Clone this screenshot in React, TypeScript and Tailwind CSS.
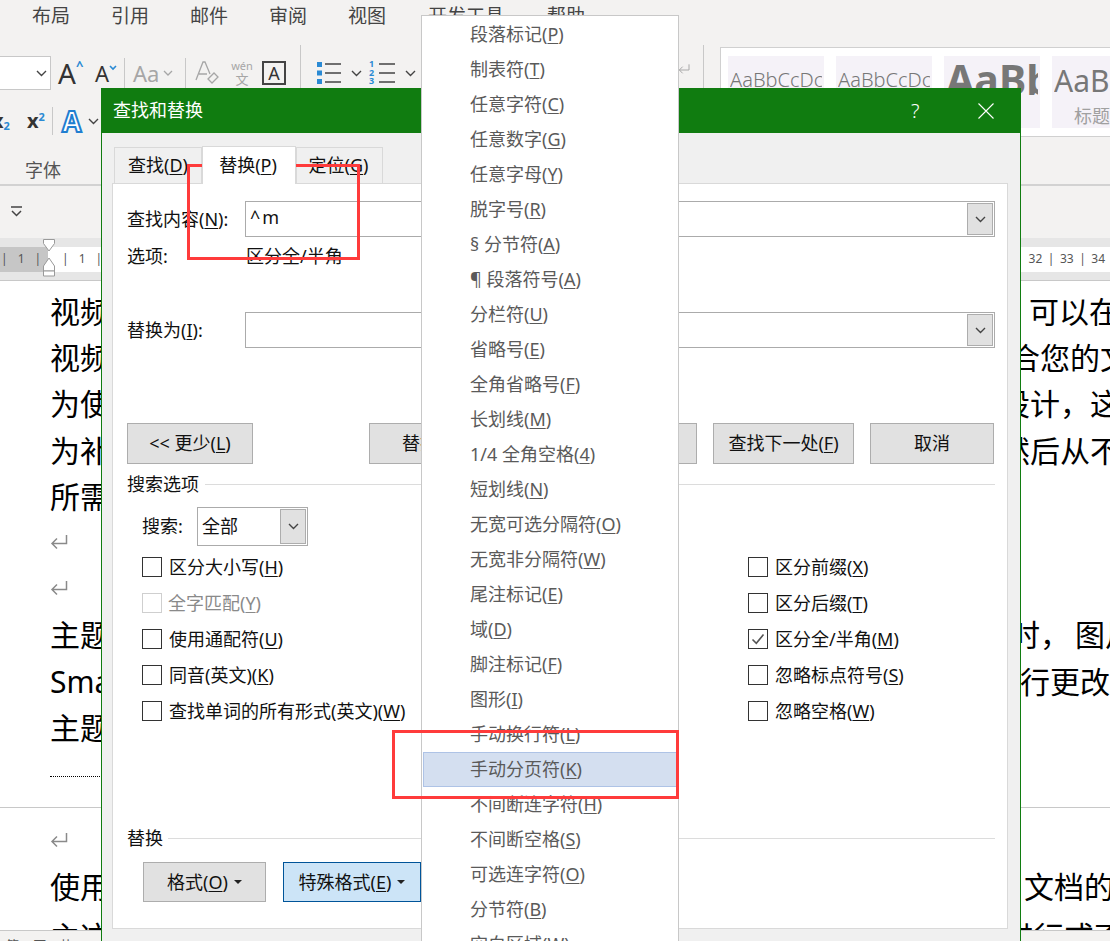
import React from "react";

const Chev = ({ className = "" }: { className?: string }) => (
  <svg width="11" height="7" viewBox="0 0 11 7" className={className} fill="none" stroke="#444" strokeWidth="1.4">
    <path d="M1 1l4.5 4.5L10 1" />
  </svg>
);

const Ret = ({ color = "#8a8a8a", w = 18 }: { color?: string; w?: number }) => (
  <svg width={w} height="16" viewBox="0 0 18 16" fill="none" stroke={color} strokeWidth="1.5">
    <path d="M16.5 1v8.5H2M7 4.5L2 9.5l5 5" />
  </svg>
);

const Acc = ({ t, k, after = ")" }: { t: string; k: string; after?: string }) => (
  <span>
    {t}(<u className="underline-offset-2">{k}</u>
    {after}
  </span>
);

const Btn = ({ className, children }: { className: string; children: React.ReactNode }) => (
  <div className={`flex shrink-0 items-center justify-center whitespace-nowrap border border-[#adadad] bg-[#e1e1e1] text-[18px] text-[#111] ${className}`}>{children}</div>
);

const Check = ({ t, k, checked, disabled }: { t: string; k: string; checked?: boolean; disabled?: boolean }) => (
  <div className={`flex h-[36px] items-center ${disabled ? "text-[#8a8a8a]" : "text-[#111]"}`}>
    <div className={`flex h-[20px] w-[20px] shrink-0 items-center justify-center border ${disabled ? "border-[#cfcfcf]" : "border-[#333]"}`}>
      {checked && (
        <svg width="14" height="12" viewBox="0 0 14 12" fill="none" stroke="#555" strokeWidth="1.6">
          <path d="M1.5 6.5l3.8 3.8L12.5 1.5" />
        </svg>
      )}
    </div>
    <span className={`whitespace-nowrap ${disabled ? "ml-[6px]" : "ml-[7px]"}`}>
      <Acc t={t} k={k} />
    </span>
  </div>
);

const DropBtn = () => (
  <div className="flex h-full w-[26px] shrink-0 items-center justify-center border border-[#adadad] bg-[#e1e1e1]">
    <Chev />
  </div>
);

const menu: [string, string][] = [
  ["段落标记", "P"], ["制表符", "T"], ["任意字符", "C"], ["任意数字", "G"], ["任意字母", "Y"], ["脱字号", "R"],
  ["§ 分节符", "A"], ["¶ 段落符号", "A"], ["分栏符", "U"], ["省略号", "E"], ["全角省略号", "F"], ["长划线", "M"],
  ["1/4 全角空格", "4"], ["短划线", "N"], ["无宽可选分隔符", "O"], ["无宽非分隔符", "W"], ["尾注标记", "E"], ["域", "D"],
  ["脚注标记", "F"], ["图形", "I"], ["手动换行符", "L"], ["手动分页符", "K"], ["不间断连字符", "H"], ["不间断空格", "S"],
  ["可选连字符", "O"], ["分节符", "B"], ["空白区域", "W"],
];

const docLines: { l?: string; r?: string; w?: string; ret?: boolean }[] = [
  { l: "视频提供", r: "可以在想", w: "w-[979px]" },
  { l: "视频代码", r: "合您的文", w: "w-[960px]" },
  { l: "为使您的", r: "设计，这些", w: "w-[950px]" },
  { l: "为补充", r: "然后从不同", w: "w-[950px]" },
  { l: "所需" },
  { ret: true },
  { ret: true },
  { l: "主题和", r: "时，\u2009图片", w: "w-[960px]" },
  { l: "Smart", r: "行更改以", w: "w-[970px]" },
  { l: "主题" },
];

const TitleTab = ({ children, className = "" }: { children: React.ReactNode; className?: string }) => (
  <div className={`whitespace-nowrap ${className}`}>{children}</div>
);

const Card = ({ children, label }: { children: React.ReactNode; label?: string }) => (
  <div className="flex h-[72px] w-[96px] shrink-0 flex-col whitespace-nowrap bg-[#f5f2f8] text-[#777]">
    <div className="mx-[2px] flex h-[48px] items-center overflow-hidden">{children}</div>
    {label && <div className="pl-[22px] text-[18px] leading-[24px] text-[#a0a0a0]">{label}</div>}
  </div>
);

export default function App() {
  return (
    <div className="relative h-[941px] w-[1110px] overflow-hidden bg-white font-['Noto_Sans','Noto_Sans_CJK_SC',sans-serif] text-[18px]">
      {/* ribbon */}
      <div className="h-[184px] bg-[#f3f2f1]">
        <div className="flex h-[33px] items-center pl-[32px] text-[19px] text-[#444]">
          <TitleTab className="w-[79px]">布局</TitleTab>
          <TitleTab className="w-[79px]">引用</TitleTab>
          <TitleTab className="w-[79px]">邮件</TitleTab>
          <TitleTab className="w-[79px]">审阅</TitleTab>
          <TitleTab className="w-[80px]">视图</TitleTab>
          <TitleTab className="w-[119px]">开发工具</TitleTab>
          <TitleTab>帮助</TitleTab>
        </div>
        <div className="flex">
          {/* left tool rows */}
          <div className="w-[720px] shrink-0">
            <div className="flex h-[56px] items-center pt-[24px]">
              <div className="flex h-[34px] w-[51px] items-center justify-end border border-l-0 border-[#c8c8c8] bg-white pr-[3px]">
                <Chev />
              </div>
              <div className="ml-[7px] flex w-[37px] items-start text-[28px] leading-none text-[#333]">
                A<span className="text-[13px] font-bold leading-none text-[#2a8ad4]">^</span>
              </div>
              <div className="flex w-[29px] items-start text-[22px] leading-none text-[#333]">
                A<svg width="8" height="6" viewBox="0 0 8 6" fill="none" stroke="#2a8ad4" strokeWidth="1.6" className="mt-[3px]"><path d="M1 1l3 3 3-3" /></svg>
              </div>
              <div className="h-[30px] w-px bg-[#c8c8c8]" />
              <div className="ml-[8px] flex w-[52px] items-center text-[22px] leading-none text-[#a6a6a6]">
                Aa
                <svg width="10" height="6" viewBox="0 0 10 6" fill="none" stroke="#a6a6a6" strokeWidth="1.3" className="ml-[4px]"><path d="M1 1l4 4 4-4" /></svg>
              </div>
              <div className="h-[30px] w-px bg-[#c8c8c8]" />
              <svg width="26" height="26" viewBox="0 0 26 26" fill="none" className="ml-[8px]" stroke="#a6a6a6" strokeWidth="1.3">
                <path d="M2 20L9 2h2l5 12M5 14h8" />
                <path d="M14 19l6-6 4 4-6 6z" />
              </svg>
              <div className="ml-[9px] flex w-[26px] flex-col items-center text-[#a6a6a6]">
                <span className="text-[11px] leading-[12px]">wén</span>
                <span className="text-[13px] leading-[14px]">文</span>
              </div>
              <div className="ml-[7px] flex h-[24px] w-[24px] items-center justify-center border-2 border-[#444] text-[18px] leading-none text-[#333]">A</div>
              <div className="ml-[14px] h-[44px] w-px self-end bg-[#c8c8c8]" />
              <svg width="24" height="24" viewBox="0 0 24 24" className="ml-[16px]">
                <rect x="0" y="1" width="5" height="5" fill="#2a8ad4" />
                <rect x="0" y="9.5" width="5" height="5" fill="#2a8ad4" />
                <rect x="0" y="18" width="5" height="5" fill="#2a8ad4" />
                <path d="M8 3h16M8 12h16M8 21h16" stroke="#444" strokeWidth="1.3" />
              </svg>
              <Chev className="ml-[10px]" />
              <div className="ml-[7px] flex w-[7px] flex-col text-[9px] font-bold leading-[8.5px] text-[#2a8ad4]">
                <span>1</span><span>2</span><span>3</span>
              </div>
              <svg width="18" height="24" viewBox="0 0 18 24" className="ml-[2px]"><path d="M1 3h16M1 12h16M1 21h16" stroke="#444" strokeWidth="1.3" /></svg>
              <Chev className="ml-[9px]" />
              <div className="ml-[262px] mt-[-8px]"><Ret color="#a8a8a8" w={12} /></div>
              <div className="ml-[13px] h-[44px] w-px self-end bg-[#c8c8c8]" />
            </div>
            <div className="mt-[16px] flex h-[32px] items-center">
              <div className="flex w-[27px] items-end text-[20px] font-bold leading-none text-[#333]">
                <span className="ml-[-8px]">x</span><span className="text-[11px] leading-[11px] text-[#2a8ad4]">2</span>
              </div>
              <div className="flex w-[25px] items-start text-[20px] font-bold leading-none text-[#333]">
                x<span className="text-[11px] leading-[11px] text-[#2a8ad4]">2</span>
              </div>
              <div className="h-[28px] w-px bg-[#c8c8c8]" />
              <div className="ml-[9px] text-[28px] font-bold leading-none text-white [-webkit-text-stroke:2px_#1f7ed0]">A</div>
              <Chev className="ml-[7px]" />
            </div>
            <div className="mt-[21px] pl-[25px] text-[18px] leading-[24px] text-[#555]">字体</div>
          </div>
          {/* style gallery */}
          <div className="mt-[14px] flex h-[90px] flex-1 gap-[12px] overflow-hidden border border-r-0 border-[#d0d0d0] bg-white pl-[7px] pt-[8px]">
            <Card><span className="text-[20px] font-light">AaBbCcDc</span></Card>
            <Card><span className="text-[20px] font-light">AaBbCcDc</span></Card>
            <Card><span className="text-[41px] font-bold">AaBb</span></Card>
            <Card label="标题"><span className="text-[30px]">AaB</span></Card>
          </div>
        </div>
      </div>
      {/* quick access strip */}
      <div className="flex h-[54px] items-center border-t-2 border-[#d2d2d2] bg-[#f3f2f1] pl-[10px]">
        <svg width="13" height="12" viewBox="0 0 13 12" fill="none" stroke="#444" strokeWidth="1.5">
          <path d="M1 1h11M2 5l4.5 4.5L11 5" />
        </svg>
      </div>
      {/* ruler */}
      <div className="relative flex h-[43px] items-center border-b border-[#c8c8c8] bg-[#e6e6e6] text-[12px] text-[#555]">
        <div className="flex h-[25px] w-[48px] items-center justify-start gap-[10px] bg-[#c6c6c6] pl-[1px]">
          <span>|</span><span>1</span><span>|</span>
        </div>
        <div className="flex h-[25px] flex-1 items-center justify-between bg-white pl-[14px] pr-[5px]">
          <div className="flex gap-[10px]"><span>|</span><span>1</span><span>|</span></div>
          <div className="flex gap-[5.5px]"><span>|</span><span>32</span><span>|</span><span>33</span><span>|</span><span>34</span></div>
        </div>
        <svg width="14" height="38" viewBox="0 0 14 38" className="absolute left-[42px] top-[1px]" fill="#fff" stroke="#9a9a9a" strokeWidth="1">
          <path d="M1.5.5h11v4L7 12 1.5 4.5z" />
          <path d="M7 19l5.5 8v5h-11v-5z" />
          <path d="M1.5 32h11v5h-11z" />
        </svg>
      </div>
      {/* document */}
      <div className="h-[527px] overflow-hidden border-b border-[#c8c8c8] pl-[50px] pt-[8px] text-[30px] text-black">
        {docLines.map((d, i) => (
          <div key={i} className="flex h-[46.2px] items-center whitespace-nowrap leading-none">
            {d.ret ? <div className="-mt-[2px]"><Ret /></div> : <span className={`shrink-0 ${d.w ?? ""}`}>{d.l}</span>}
            {d.r && <span className="shrink-0">{d.r}</span>}
          </div>
        ))}
        <div className="mt-[25px] w-[100px] border-t border-dotted border-black" />
      </div>
      <div className="h-[122px] overflow-hidden pl-[50px] pt-[23px] text-[30px] text-black">
        <div className="flex h-[18px] items-center"><Ret /></div>
        <div className="mt-[17px] flex h-[40px] items-center whitespace-nowrap">
          <span className="w-[974px] shrink-0">使用</span><span className="shrink-0">文档的外</span>
        </div>
        <div className="mt-[10px] flex h-[40px] items-center whitespace-nowrap">
          <span className="w-[954px] shrink-0">主这</span><span className="shrink-0">进行或否</span>
        </div>
      </div>
      <div className="flex h-[11px] justify-between overflow-hidden border-t border-[#c8c8c8] bg-[#f3f2f1] px-[6px] pt-[7px] text-[13px] leading-[14px] text-[#555]">
        <span className="whitespace-nowrap">第 1 页，共</span><span>[=]</span>
      </div>

      {/* dialog */}
      <div className="absolute left-[101px] top-[88px] flex h-[853px] w-[920px] flex-col border-x border-[#107c10] bg-[#f0f0f0]">
        <div className="flex h-[45px] shrink-0 items-center bg-[#107c10] pl-[11px] text-[18px] text-white">
          <span>查找和替换</span>
          <span className="ml-[708px] w-[67px] text-[20px] font-light">?</span>
          <svg width="16" height="16" viewBox="0 0 16 16" fill="none" stroke="#fff" strokeWidth="1.1">
            <path d="M.5.5l15 15M15.5.5l-15 15" />
          </svg>
        </div>
        <div className="flex h-[50px] shrink-0 items-end pl-[12px] text-[#111]">
          <div className="flex h-[36px] w-[88px] items-center justify-center whitespace-nowrap border border-b-0 border-[#d9d9d9]">
            <Acc t="查找" k="D" />
          </div>
          <div className="z-10 -mb-px flex h-[38px] w-[94px] items-center justify-center whitespace-nowrap border border-b-0 border-[#d9d9d9] bg-white pr-[2px]">
            <Acc t="替换" k="P" />
          </div>
          <div className="flex h-[36px] w-[87px] items-center justify-center whitespace-nowrap border border-b-0 border-[#d9d9d9] pr-[2px]">
            <Acc t="定位" k="G" />
          </div>
        </div>
        <div className="ml-[10px] h-[746px] w-[896px] border border-[#d9d9d9] bg-white pl-[14px] pr-[12px] text-[#111]">
          <div className="mt-[17px] flex h-[36px] items-center">
            <span className="w-[118px] shrink-0 whitespace-nowrap"><Acc t="查找内容" k="N" after="):" /></span>
            <div className="flex h-full flex-1 items-center justify-between border border-[#ababab] py-[1px] pl-[4px] pr-[1px]">
              <span className="mt-[-4px] text-[18px] tracking-[2px]">^m</span>
              <DropBtn />
            </div>
          </div>
          <div className="mt-[7px] flex h-[24px] items-center">
            <span className="w-[119px]">选项:</span>
            <span>区分全/半角</span>
          </div>
          <div className="mt-[44px] flex h-[36px] items-center">
            <span className="w-[118px] shrink-0 whitespace-nowrap"><Acc t="替换为" k="I" after="):" /></span>
            <div className="flex h-full flex-1 justify-end border border-[#ababab] py-[1px] pr-[1px]">
              <DropBtn />
            </div>
          </div>
          <div className="mt-[75px] flex h-[41px]">
            <Btn className="w-[126px]"><span>&lt;&lt; 更少</span><Acc t="" k="L" /></Btn>
            <Btn className="ml-[116px] w-[141px] justify-start pl-[32px]"><Acc t="替换" k="R" /></Btn>
            <Btn className="ml-[16px] w-[171px]"><Acc t="全部替换" k="A" /></Btn>
            <Btn className="ml-[16px] w-[141px]"><Acc t="查找下一处" k="F" /></Btn>
            <Btn className="ml-[16px] w-[124px]">取消</Btn>
          </div>
          <div className="mt-[8px] flex h-[24px] items-center">
            <span className="whitespace-nowrap">搜索选项</span>
            <div className="ml-[6px] h-px flex-1 bg-[#dcdcdc]" />
          </div>
          <div className="ml-[15px] mt-[11px] flex h-[39px] items-center">
            <span className="w-[55px]">搜索:</span>
            <div className="flex h-full w-[111px] items-center justify-between border border-[#ababab] py-[1px] pl-[4px] pr-[1px]">
              <span>全部</span>
              <DropBtn />
            </div>
          </div>
          <div className="ml-[15px] mt-[3px] flex">
            <div className="w-[606px]">
              <Check t="区分大小写" k="H" />
              <Check t="全字匹配" k="Y" disabled />
              <Check t="使用通配符" k="U" />
              <Check t="同音(英文)" k="K" />
              <Check t="查找单词的所有形式(英文)" k="W" />
            </div>
            <div>
              <Check t="区分前缀" k="X" />
              <Check t="区分后缀" k="T" />
              <Check t="区分全/半角" k="M" checked />
              <Check t="忽略标点符号" k="S" />
              <Check t="忽略空格" k="W" />
            </div>
          </div>
          <div className="mt-[97px] flex h-[24px] items-center">
            <span>替换</span>
            <div className="ml-[5px] h-px flex-1 bg-[#dcdcdc]" />
          </div>
          <div className="ml-[16px] mt-[12px] flex h-[40px]">
            <Btn className="w-[123px] gap-[6px]"><Acc t="格式" k="O" /><span className="h-0 w-0 border-x-[4px] border-t-[4px] border-x-transparent border-t-[#222]" /></Btn>
            <div className="ml-[17px] flex w-[138px] items-center justify-center gap-[6px] whitespace-nowrap border border-[#005499] bg-[#cce4f7]">
              <Acc t="特殊格式" k="E" /><span className="h-0 w-0 border-x-[4px] border-t-[4px] border-x-transparent border-t-[#222]" />
            </div>
          </div>
        </div>
      </div>

      {/* popup menu */}
      <div className="absolute left-[421px] top-[15px] h-[940px] w-[258px] overflow-hidden border border-[#c8c8c8] bg-white pt-[1px] text-[#5a5a5a]">
        {menu.map(([t, k], i) => (
          <div
            key={i}
            className={`mx-px flex h-[35px] items-center whitespace-nowrap border pl-[46px] ${
              i === 21 ? "border-[#aec3e6] bg-[#d4dff0]" : "border-transparent"
            }`}
          >
            <Acc t={t} k={k} />
          </div>
        ))}
      </div>

      {/* red annotations */}
      <div className="absolute left-[187px] top-[164px] h-[96px] w-[173px] border-[3px] border-[#ff3b3b]" />
      <div className="absolute left-[392px] top-[730px] h-[69px] w-[287px] border-[3px] border-[#ff3b3b]" />
    </div>
  );
}
